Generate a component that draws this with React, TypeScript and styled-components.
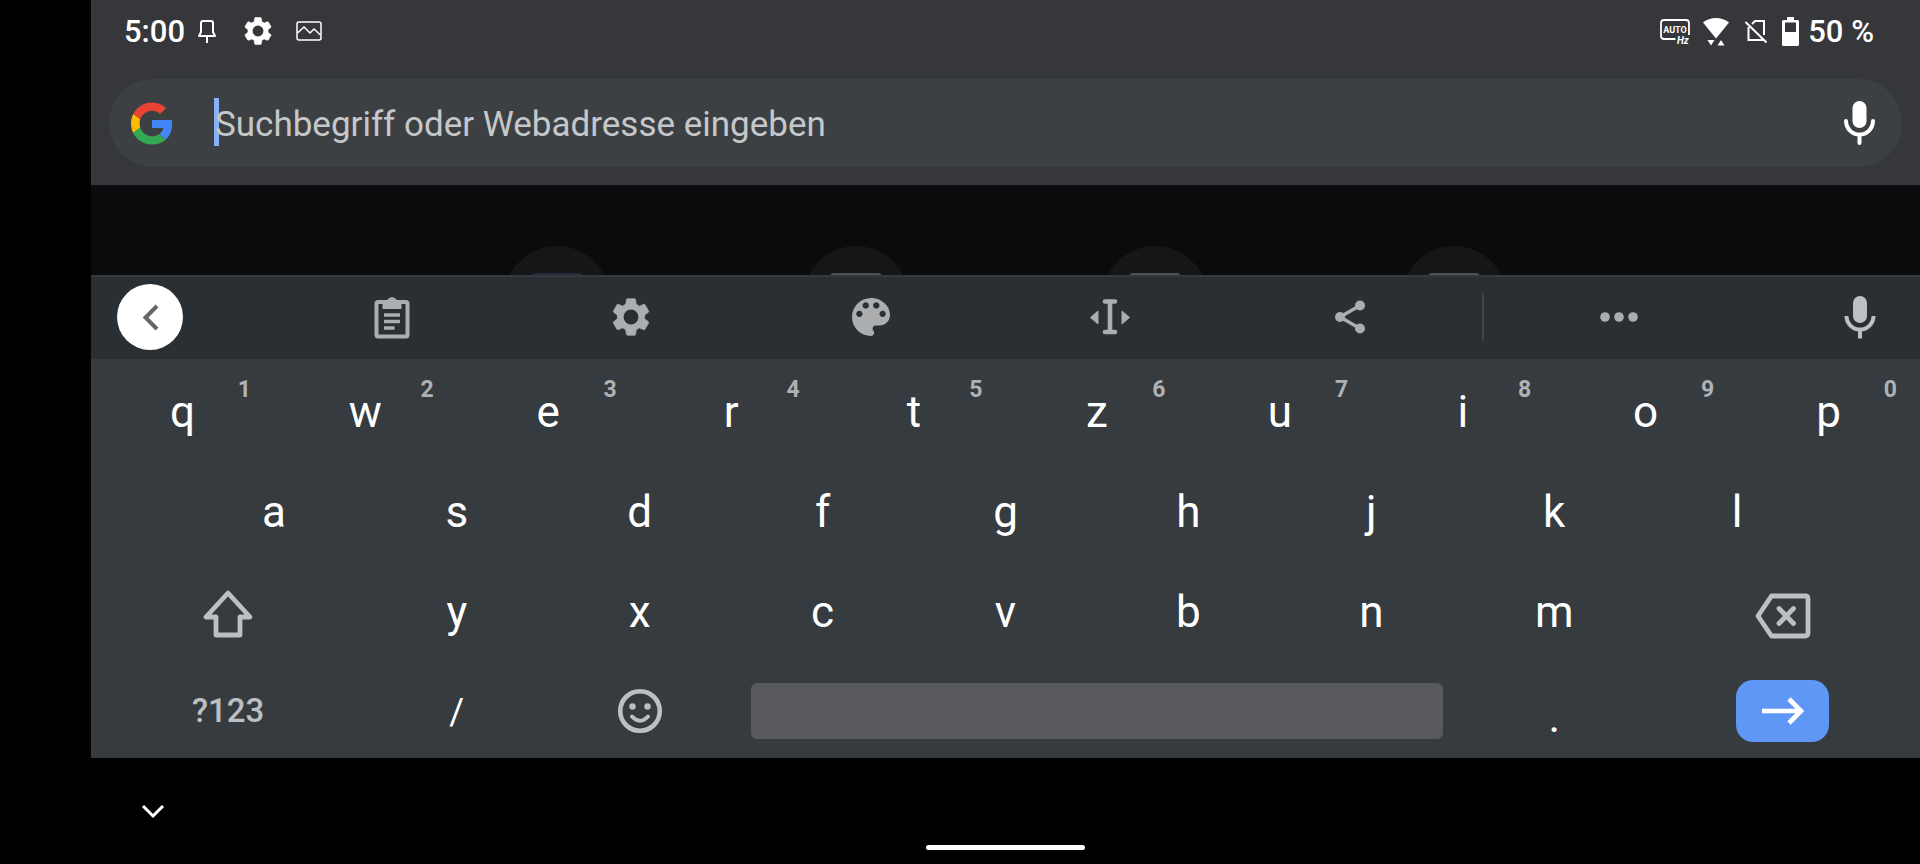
import React from "react";
import styled, { createGlobalStyle } from "styled-components";

const GlobalStyle = createGlobalStyle`
  *, *::before, *::after { box-sizing: border-box; }
  html, body, #root { height: 100%; }
  body { margin: 0; background: #000; font-family: Roboto, "Liberation Sans", sans-serif; color: #fff; }
  svg { display: block; flex: none; }
`;

const PlainButton = styled.button`
  border: 0;
  padding: 0;
  margin: 0;
  background: none;
  color: inherit;
  font: inherit;
  display: flex;
  align-items: center;
  justify-content: center;
`;

const Screen = styled.div`
  min-height: 100%;
  padding-left: 91px;
  display: flex;
  flex-direction: column;
  background: #000;
`;

const TopArea = styled.header`
  background: #36373b;
  padding-bottom: 18px;
`;

const StatusBar = styled.div`
  height: 79px;
  padding: 0 46px 17px 33px;
  display: flex;
  align-items: center;
  justify-content: space-between;
`;

const StatusGroup = styled.div<{ $gap: number }>`
  display: flex;
  align-items: center;
  gap: ${(p) => p.$gap}px;
`;

const StatusText = styled.span`
  padding-top: 2px;
  font-size: 31px;
  line-height: 36px;
  font-weight: 500;
`;

const Clock = styled(StatusText)`
  margin-right: -13px;
`;

const BatteryLevel = styled(StatusText)`
  margin-left: -3px;
`;

const SearchBox = styled.form`
  height: 88px;
  margin: 0 18px;
  padding: 0 26px 0 22px;
  border-radius: 44px;
  background: #3d4043;
  display: flex;
  align-items: center;
`;

const SearchField = styled.label`
  position: relative;
  flex: 1;
  margin-left: 41px;
  display: flex;

  &::before {
    content: "";
    position: absolute;
    left: 0;
    top: 0;
    width: 5px;
    height: 48px;
    background: #8ab0f8;
  }
`;

const SearchInput = styled.input`
  position: relative;
  flex: 1;
  min-width: 0;
  height: 50px;
  border: 0;
  padding: 2px 0 0 1px;
  background: none;
  outline: none;
  color: #fff;
  font: 400 35px/48px Roboto, "Liberation Sans", sans-serif;
  &::placeholder { color: #c5c8ca; opacity: 1; }
`;

const Shortcuts = styled.main`
  height: 90px;
  padding-top: 61px;
  overflow: hidden;
  background: #0a0b0d;
  display: flex;
  justify-content: center;
  gap: 193px;
`;

const ShortcutTile = styled.div<{ $tint: string }>`
  flex: none;
  width: 106px;
  height: 106px;
  padding-top: 27px;
  border-radius: 50%;
  background: #151618;
  display: flex;
  justify-content: center;

  &::before {
    content: "";
    width: 52px;
    height: 52px;
    border-radius: 4px;
    background: ${(p) => p.$tint};
  }
`;

const Toolbar = styled.div`
  height: 84px;
  padding-bottom: 2px;
  border-top: 2px solid #363a3e;
  background: #2a2f33;
  color: #abadaf;
  display: flex;
  align-items: center;
`;

const ToolbarEnd = styled.div<{ $right?: boolean }>`
  width: 181px;
  padding: 0 ${(p) => (p.$right ? 44 : 0)}px 0 ${(p) => (p.$right ? 0 : 26)}px;
  display: flex;
  justify-content: ${(p) => (p.$right ? "flex-end" : "flex-start")};
  color: #bdc0c3;
`;

const BackButton = styled(PlainButton)`
  width: 66px;
  height: 66px;
  border-radius: 50%;
  background: #fff;
  color: #666;
`;

const ToolButton = styled(PlainButton)`
  flex: 1;
  height: 100%;
`;

const ToolDivider = styled.div`
  width: 2px;
  height: 48px;
  margin: 0 16px 0 12px;
  background: #404448;
`;

const Keyboard = styled.section`
  background: #363b3f;
`;

const KeyRow = styled.div<{ $inset?: boolean }>`
  height: 100px;
  padding: 0 ${(p) => (p.$inset ? "5%" : "0")};
  display: grid;
  grid-template-columns: repeat(${(p) => (p.$inset ? 18 : 20)}, minmax(0, 1fr));

  &:last-child { height: 99px; }
`;

type KeyKind = "letter" | "symbol" | "period" | "mode" | "icon";

const KEY_STYLE: Record<KeyKind, { size: number; weight: number; drop: number; color: string }> = {
  letter: { size: 44, weight: 400, drop: 6, color: "#fff" },
  symbol: { size: 36, weight: 400, drop: 6, color: "#fff" },
  period: { size: 44, weight: 400, drop: 16, color: "#fff" },
  mode: { size: 33, weight: 500, drop: 4, color: "#bdc0c3" },
  icon: { size: 44, weight: 400, drop: 10, color: "#bdc0c3" },
};

const Key = styled(PlainButton)<{ $span?: number; $kind: KeyKind }>`
  position: relative;
  grid-column: span ${(p) => p.$span ?? 2};
  color: ${(p) => KEY_STYLE[p.$kind].color};
  font-size: ${(p) => KEY_STYLE[p.$kind].size}px;
  font-weight: ${(p) => KEY_STYLE[p.$kind].weight};
  line-height: 52px;
  padding-top: ${(p) => KEY_STYLE[p.$kind].drop}px;
`;

const KeyHint = styled.span`
  position: absolute;
  top: 17px;
  right: 23px;
  font-size: 23px;
  line-height: 28px;
  font-weight: 700;
  color: #afb1b4;
`;

const SpaceKey = styled(Key)`
  padding: 4px 20px 0;

  &::before {
    content: "";
    flex: 1;
    height: 56px;
    border-radius: 6px;
    background: #57595e;
  }
`;

const EnterFace = styled.span`
  width: 93px;
  height: 62px;
  border-radius: 17px;
  background: #5f97f6;
  color: #fff;
  display: flex;
  align-items: center;
  justify-content: center;
`;

const NavBar = styled.footer`
  flex: 1;
  min-height: 106px;
  display: flex;
  flex-direction: column;
  align-items: center;
  justify-content: space-between;
  padding: 46px 0 14px;
`;

const HideButton = styled(PlainButton)`
  align-self: flex-start;
  margin-left: 50px;
`;

const HomeHandle = styled.div`
  width: 159px;
  height: 5px;
  border-radius: 3px;
  background: #fff;
`;

const GEAR =
  "M19.14 12.94c.04-.3.06-.61.06-.94 0-.32-.02-.64-.07-.94l2.03-1.58c.18-.14.23-.41.12-.61l-1.92-3.32c-.12-.22-.37-.29-.59-.22l-2.39.96c-.5-.38-1.03-.7-1.62-.94l-.36-2.54c-.04-.24-.24-.41-.48-.41h-3.84c-.24 0-.43.17-.47.41l-.36 2.54c-.59.24-1.13.57-1.62.94l-2.39-.96c-.22-.08-.47 0-.59.22L2.74 8.87c-.12.21-.08.47.12.61l2.03 1.58c-.05.3-.09.63-.09.94s.02.64.07.94l-2.03 1.58c-.18.14-.23.41-.12.61l1.92 3.32c.12.22.37.29.59.22l2.39-.96c.5.38 1.03.7 1.62.94l.36 2.54c.05.24.24.41.48.41h3.84c.24 0 .44-.17.47-.41l.36-2.54c.59-.24 1.13-.56 1.62-.94l2.39.96c.22.08.47 0 .59-.22l1.92-3.32c.12-.22.07-.47-.12-.61l-2.01-1.58z";

const GearIcon = ({ size, hole }: { size: number; hole: string }) => (
  <svg width={size} height={size} viewBox="2 2 20 20" fill="currentColor">
    <path d={GEAR} stroke="currentColor" strokeWidth=".4" />
    <circle cx="12" cy="12" r="3.9" fill={hole} />
  </svg>
);

const PinIcon = () => (
  <svg width="24" height="25" viewBox="-1 0 24 25" fill="none" stroke="currentColor" strokeWidth="2" strokeLinejoin="round">
    <path d="M4 4Q4 2 6 2h8Q16 2 16 4v9l2 4H2l2-4zM10 17v7" />
  </svg>
);

const PictureIcon = () => (
  <svg width="26" height="20" viewBox="0 0 26 20" fill="none" stroke="currentColor" strokeWidth="1.500">
    <rect x="1" y="1" width="24" height="18" rx="2" />
    <path d="M1.500 12l6.500-6 6 6 4-4 6.500 6" />
  </svg>
);

const AutoHzIcon = () => (
  <svg width="30" height="26" viewBox="0 0 30 26" fill="none">
    <path d="M15.500 21H4q-3 0-3-3V5q0-3 3-3h22q3 0 3 3v12" stroke="currentColor" strokeWidth="1.800" />
    <text x="15" y="14.500" fontSize="9" fontWeight="700" textAnchor="middle" fill="currentColor">AUTO</text>
    <text x="17" y="25.500" fontSize="10" fontWeight="700" fontStyle="italic" fill="currentColor">Hz</text>
  </svg>
);

const WifiIcon = () => (
  <svg width="28" height="29" viewBox="0 0 28 29" fill="currentColor">
    <path d="M1 5.500C8-.5 20-.5 27 5.500L14 21.500zM5.500 23h7L9 28.500zM15.500 28.500h7L19 23z" />
  </svg>
);

const NoSimIcon = () => (
  <svg width="28" height="25" viewBox="-2 0 28 25" fill="none" stroke="currentColor" strokeWidth="2">
    <path d="M8 5l3-3h9v14M4.500 8v13H19M1.500 3l21 20.500" />
  </svg>
);

const BatteryIcon = () => (
  <svg width="17" height="29" viewBox="0 0 17 29">
    <path
      fill="currentColor"
      fillRule="evenodd"
      d="M5 0h7v3h3.500q1.500 0 1.500 1.500v23q0 1.500-1.500 1.500h-14Q0 29 0 27.500v-23Q0 3 1.500 3H5zM3 5.500V15h11V5.500z"
    />
  </svg>
);

const GoogleIcon = () => (
  <svg width="42" height="43" viewBox="0 0 48 48">
    <path fill="#EA4335" d="M24 9.500c3.540 0 6.710 1.220 9.210 3.600l6.850-6.850C35.900 2.380 30.470 0 24 0 14.620 0 6.510 5.380 2.560 13.220l7.980 6.190C12.430 13.720 17.740 9.500 24 9.500z" />
    <path fill="#4285F4" d="M46.980 24.550c0-1.570-.15-3.090-.38-4.550H24v9.020h12.940c-.58 2.960-2.260 5.480-4.780 7.180l7.730 6c4.510-4.180 7.090-10.360 7.090-17.650z" />
    <path fill="#FBBC05" d="M10.530 28.590c-.48-1.450-.76-2.990-.76-4.590s.27-3.140.76-4.590l-7.980-6.190C.92 16.460 0 20.120 0 24c0 3.880.92 7.540 2.560 10.780l7.970-6.190z" />
    <path fill="#34A853" d="M24 48c6.480 0 11.930-2.130 15.890-5.810l-7.730-6c-2.150 1.450-4.920 2.300-8.160 2.300-6.260 0-11.570-4.220-13.470-9.910l-7.980 6.190C6.510 42.620 14.620 48 24 48z" />
  </svg>
);

const SearchMicIcon = () => (
  <svg width="33" height="46" viewBox="0 0 33 46" fill="none">
    <rect x="9.500" y="1" width="14" height="27" rx="7" fill="currentColor" />
    <path d="M3 21a13.500 13.500 0 0 0 27 0M16.500 34.500V43" stroke="currentColor" strokeWidth="4" strokeLinecap="round" />
  </svg>
);

const KeyMicIcon = () => (
  <svg width="33" height="44" viewBox="0 0 33 44" fill="none">
    <rect x="10" y="1" width="14" height="27" rx="7" fill="currentColor" />
    <path d="M3.500 21a13.500 13.500 0 0 0 27 0M17 34v9.500" stroke="currentColor" strokeWidth="4" />
  </svg>
);

const BackIcon = () => (
  <svg width="66" height="66" viewBox="0 0 66 66" fill="none" stroke="currentColor" strokeWidth="4">
    <path d="M40 22L28.500 33.500 40 45" />
  </svg>
);

const ClipboardIcon = () => (
  <svg width="36" height="44" viewBox="0 0 36 44" fill="none">
    <rect x="2.500" y="7" width="31" height="34.500" rx="1.500" stroke="currentColor" strokeWidth="4" />
    <path fill="currentColor" fillRule="evenodd" d="M8.500 6H13a5.200 5.200 0 0 1 10 0h4.500v8h-19zM18 4.800a2 2 0 1 0 0 4 2 2 0 0 0 0-4z" />
    <path d="M10 20h16M10 26.500h16M10 33h10.500" stroke="currentColor" strokeWidth="3.600" />
  </svg>
);

const PaletteIcon = () => (
  <svg width="38" height="38" viewBox="3 3 18 18" fill="currentColor">
    <path d="M12 3c-4.970 0-9 4.030-9 9s4.030 9 9 9c.83 0 1.500-.67 1.500-1.500 0-.39-.15-.74-.39-1.010-.23-.26-.38-.61-.38-.99 0-.83.67-1.500 1.500-1.500H16c2.760 0 5-2.240 5-5 0-4.420-4.030-8-9-8zm-5.500 9c-.83 0-1.500-.67-1.500-1.500S5.670 9 6.500 9 8 9.670 8 10.500 7.330 12 6.500 12zm3-4C8.670 8 8 7.330 8 6.500S8.670 5 9.500 5s1.500.67 1.500 1.500S10.330 8 9.500 8zm5 0c-.83 0-1.500-.67-1.500-1.500S13.670 5 14.500 5s1.500.67 1.500 1.500S15.330 8 14.500 8zm3 4c-.83 0-1.500-.67-1.500-1.500S16.670 9 17.500 9s1.500.67 1.500 1.500-.67 1.500-1.500 1.500z" />
  </svg>
);

const TextCursorIcon = () => (
  <svg width="40" height="36" viewBox="0 0 40 36" fill="none">
    <path d="M15 2.500h10M15 33h10M20 3v30" stroke="currentColor" strokeWidth="4.600" strokeLinecap="round" />
    <path d="M8 12v13L.5 18.500zM32 12v13l7.500-6.500z" fill="currentColor" stroke="currentColor" strokeWidth="1" strokeLinejoin="round" />
  </svg>
);

const ShareIcon = () => (
  <svg width="32" height="34" viewBox="0 0 32 34" fill="currentColor">
    <path d="M26 5.500L6 17l20 11.500" fill="none" stroke="currentColor" strokeWidth="3.400" />
    <circle cx="26" cy="5.500" r="5" />
    <circle cx="6" cy="17" r="5" />
    <circle cx="26" cy="28.500" r="5" />
  </svg>
);

const MoreIcon = () => (
  <svg width="38" height="10" viewBox="0 0 38 10" fill="currentColor">
    <circle cx="5" cy="5" r="4.800" />
    <circle cx="19" cy="5" r="4.800" />
    <circle cx="33" cy="5" r="4.800" />
  </svg>
);

const ShiftIcon = () => (
  <svg width="50" height="48" viewBox="0 0 50 48" fill="none" stroke="currentColor" strokeWidth="4.800" strokeLinejoin="round">
    <path d="M25 3L3 27h10v18h24V27h10z" />
  </svg>
);

const BackspaceIcon = () => (
  <svg width="56" height="50" viewBox="0 -4 56 50" fill="none" stroke="currentColor" strokeWidth="4.800" strokeLinejoin="round">
    <path d="M16.500 3H50q3 0 3 3v34q0 3-3 3H16.500L3 23z" />
    <path d="M24 15.500l14.500 15M38.500 15.500l-14.500 15" strokeLinecap="round" />
  </svg>
);

const SmileyIcon = () => (
  <svg width="46" height="46" viewBox="0 0 46 46" fill="none" stroke="currentColor" strokeWidth="4.600">
    <circle cx="23" cy="23" r="19.800" />
    <circle cx="15.500" cy="18.500" r="3.200" fill="currentColor" stroke="none" />
    <circle cx="30.500" cy="18.500" r="3.200" fill="currentColor" stroke="none" />
    <path d="M15 28.500q8 8.500 16 0" strokeWidth="4" strokeLinecap="round" />
  </svg>
);

const EnterIcon = () => (
  <svg width="44" height="28" viewBox="0 0 44 28" fill="none" stroke="currentColor" strokeWidth="4.600">
    <path d="M1 14h38M28 2l12 12-12 12" />
  </svg>
);

const HideIcon = () => (
  <svg width="24" height="16" viewBox="0 0 24 16" fill="none" stroke="currentColor" strokeWidth="3">
    <path d="M2 2l10 10L22 2" />
  </svg>
);

const TOOLS = [
  { label: "Zwischenablage", icon: <ClipboardIcon /> },
  { label: "Einstellungen", icon: <GearIcon size={38} hole="#2a2f33" /> },
  { label: "Design", icon: <PaletteIcon /> },
  { label: "Textbearbeitung", icon: <TextCursorIcon /> },
  { label: "Teilen", icon: <ShareIcon /> },
];

const SHORTCUT_TINTS = ["#222a3e", "#505153", "#505153", "#505153"];

const Letters = ({ keys, hints }: { keys: string; hints?: string }) => (
  <>
    {[...keys].map((letter, i) => (
      <Key key={letter} type="button" $kind="letter">
        {letter}
        {hints && <KeyHint>{hints[i]}</KeyHint>}
      </Key>
    ))}
  </>
);

export default function App() {
  return (
    <Screen>
      <GlobalStyle />
      <TopArea>
        <StatusBar>
          <StatusGroup $gap={24}>
            <Clock>5:00</Clock>
            <PinIcon />
            <GearIcon size={28} hole="#36373b" />
            <PictureIcon />
          </StatusGroup>
          <StatusGroup $gap={12}>
            <AutoHzIcon />
            <WifiIcon />
            <NoSimIcon />
            <BatteryIcon />
            <BatteryLevel>50 %</BatteryLevel>
          </StatusGroup>
        </StatusBar>
        <SearchBox>
          <GoogleIcon />
          <SearchField>
            <SearchInput type="text" aria-label="Suche" placeholder="Suchbegriff oder Webadresse eingeben" />
          </SearchField>
          <PlainButton type="button" aria-label="Sprachsuche">
            <SearchMicIcon />
          </PlainButton>
        </SearchBox>
      </TopArea>

      <Shortcuts>
        {SHORTCUT_TINTS.map((tint, i) => (
          <ShortcutTile key={i} $tint={tint} />
        ))}
      </Shortcuts>

      <Keyboard>
        <Toolbar>
          <ToolbarEnd>
            <BackButton type="button" aria-label="Zurück">
              <BackIcon />
            </BackButton>
          </ToolbarEnd>
          {TOOLS.map((tool) => (
            <ToolButton key={tool.label} type="button" aria-label={tool.label}>
              {tool.icon}
            </ToolButton>
          ))}
          <ToolDivider />
          <ToolButton type="button" aria-label="Mehr">
            <MoreIcon />
          </ToolButton>
          <ToolbarEnd $right>
            <PlainButton type="button" aria-label="Spracheingabe">
              <KeyMicIcon />
            </PlainButton>
          </ToolbarEnd>
        </Toolbar>

        <KeyRow>
          <Letters keys="qwertzuiop" hints="1234567890" />
        </KeyRow>
        <KeyRow $inset>
          <Letters keys="asdfghjkl" />
        </KeyRow>
        <KeyRow>
          <Key type="button" aria-label="Umschalt" $span={3} $kind="icon">
            <ShiftIcon />
          </Key>
          <Letters keys="yxcvbnm" />
          <Key type="button" aria-label="Löschen" $span={3} $kind="icon">
            <BackspaceIcon />
          </Key>
        </KeyRow>
        <KeyRow>
          <Key type="button" $span={3} $kind="mode">?123</Key>
          <Key type="button" $kind="symbol">/</Key>
          <Key type="button" aria-label="Emoji" $kind="mode">
            <SmileyIcon />
          </Key>
          <SpaceKey type="button" aria-label="Leertaste" $span={8} $kind="mode" />
          <Key type="button" $kind="period">.</Key>
          <Key type="button" aria-label="Los" $span={3} $kind="mode">
            <EnterFace>
              <EnterIcon />
            </EnterFace>
          </Key>
        </KeyRow>
      </Keyboard>

      <NavBar>
        <HideButton type="button" aria-label="Tastatur ausblenden">
          <HideIcon />
        </HideButton>
        <HomeHandle />
      </NavBar>
    </Screen>
  );
}
